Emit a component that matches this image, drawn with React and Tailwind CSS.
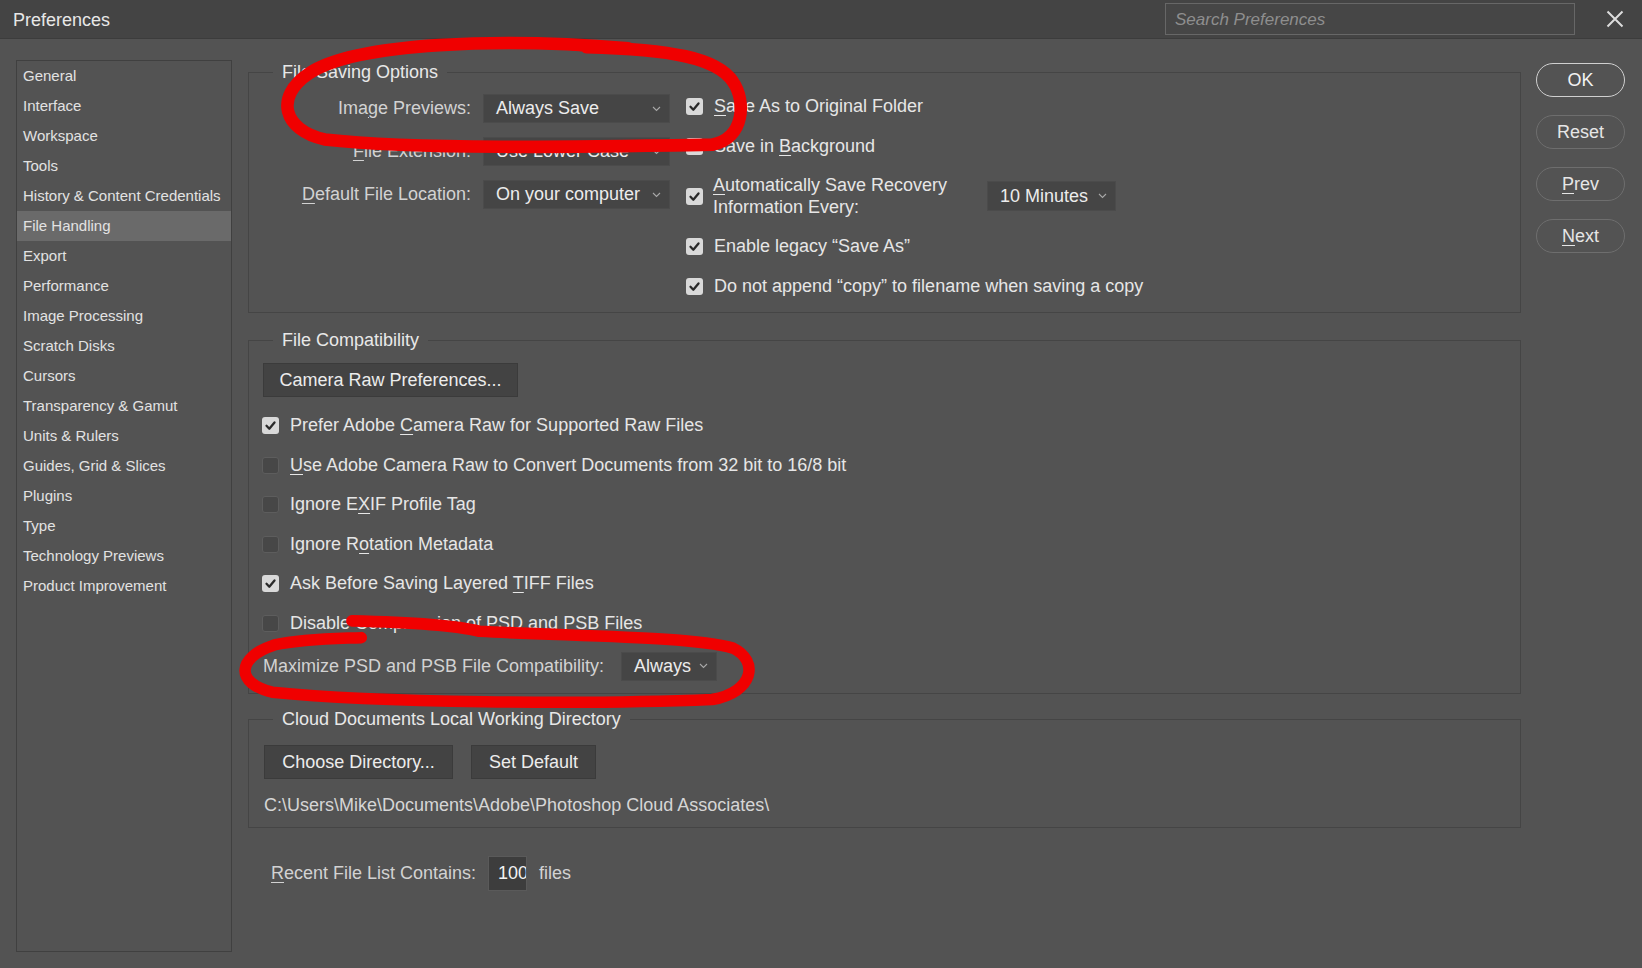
import React from 'react';

const sidebarItems = [
  'General',
  'Interface',
  'Workspace',
  'Tools',
  'History & Content Credentials',
  'File Handling',
  'Export',
  'Performance',
  'Image Processing',
  'Scratch Disks',
  'Cursors',
  'Transparency & Gamut',
  'Units & Rulers',
  'Guides, Grid & Slices',
  'Plugins',
  'Type',
  'Technology Previews',
  'Product Improvement',
];

const Chevron = () => (
  <svg width="9" height="6" viewBox="0 0 9 6" fill="none">
    <path d="M1 1l3.5 3.5L8 1" stroke="#a8a8a8" strokeWidth="1.1" />
  </svg>
);

const Check = ({ checked }) =>
  checked ? (
    <div className="w-[17px] h-[17px] rounded-[3px] bg-[#d9d9d9] flex items-center justify-center shrink-0">
      <svg width="13" height="13" viewBox="0 0 13 13" fill="none">
        <path d="M2.5 6.8l2.8 2.9 5.2-6.3" stroke="#2a2a2a" strokeWidth="2.3" strokeLinecap="round" strokeLinejoin="round" />
      </svg>
    </div>
  ) : (
    <div className="w-[17px] h-[17px] rounded-[3px] bg-[#474747] border border-[#5d5d5d] shrink-0" />
  );

const Select = ({ className, children }) => (
  <div className={`h-[29px] bg-[#454545] border border-[#4b4b4b] flex items-center justify-between pl-[12px] pr-[8px] text-[#ececec] ${className}`}>
    <span>{children}</span>
    <Chevron />
  </div>
);

const Btn = ({ className, children }) => (
  <div className={`h-[34px] bg-[#434343] border border-[#3b3b3b] flex items-center justify-center text-[#ececec] ${className}`}>
    {children}
  </div>
);

const Row = ({ checked, children, className = 'h-[40px]' }) => (
  <div className={`flex items-center ${className}`}>
    <Check checked={checked} />
    <div className="ml-[11px] text-[#e6e6e6]">{children}</div>
  </div>
);

const U = ({ children }) => <span className="underline underline-offset-[3px]">{children}</span>;

const Group = ({ title, className = '', children }) => (
  <fieldset className={`border border-[#454545] ${className}`}>
    <legend className="ml-[24px] px-[9px] leading-[22px] text-[#e8e8e8]">{title}</legend>
    {children}
  </fieldset>
);

export default function App() {
  return (
    <div className="relative w-[1642px] h-[968px] overflow-hidden bg-[#535353] text-[18px] font-['Liberation_Sans',Arial,sans-serif]">
      {/* title bar */}
      <div className="h-[39px] bg-[#444444] border-b border-[#3c3c3c] flex items-center pl-[13px]">
        <div className="mt-[3px] text-[#e8e8e8]">Preferences</div>
        <div className="ml-auto w-[410px] h-[32px] border border-[#676767] bg-[#464646] flex items-center px-[9px] pt-[1px] italic text-[17px] text-[#8e8e8e]">
          Search Preferences
        </div>
        <svg className="ml-[31px] mr-[18px]" width="18" height="18" viewBox="0 0 18 18" fill="none">
          <path d="M1.5 1.5l15 15M16.5 1.5l-15 15" stroke="#dcdcdc" strokeWidth="2" />
        </svg>
      </div>

      <div className="flex items-start">
        {/* sidebar */}
        <div className="ml-[16px] mt-[21px] w-[216px] h-[892px] border border-[#404040] text-[15px] text-[#e2e2e2]">
          {sidebarItems.map((item) => (
            <div
              key={item}
              className={`h-[30px] flex items-center px-[6px] ${item === 'File Handling' ? 'bg-[#6a6a6a]' : ''}`}
            >
              {item}
            </div>
          ))}
        </div>

        {/* main */}
        <div className="ml-[16px] mt-[22px] w-[1273px]">
          <Group title="File Saving Options">
            <div className="flex pb-[6px]">
              <div className="w-[421px] flex flex-col gap-[14px] pt-[11px]">
                <div className="h-[29px] flex items-center justify-end gap-[12px]">
                  <span className="text-[#d2d2d2]">Ima<U>g</U>e Previews:</span>
                  <Select className="w-[187px]">Always Save</Select>
                </div>
                <div className="h-[29px] flex items-center justify-end gap-[12px]">
                  <span className="text-[#d2d2d2]"><U>F</U>ile Extension:</span>
                  <Select className="w-[187px]">Use Lower Case</Select>
                </div>
                <div className="h-[29px] flex items-center justify-end gap-[12px]">
                  <span className="text-[#d2d2d2]"><U>D</U>efault File Location:</span>
                  <Select className="w-[187px]">On your computer</Select>
                </div>
              </div>
              <div className="ml-[16px] flex flex-col pt-[3px]">
                <Row checked><U>S</U>ave As to Original Folder</Row>
                <Row checked>Save in <U>B</U>ackground</Row>
                <div className="h-[60px] flex items-center">
                  <Check checked />
                  <div className="ml-[10px] w-[274px] leading-[22px] text-[#e6e6e6]">
                    <U>A</U>utomatically Save Recovery
                    <br />
                    Information Every:
                  </div>
                  <Select className="w-[129px] h-[30px]">10 Minutes</Select>
                </div>
                <Row checked>Enable legacy “Save As”</Row>
                <Row checked>Do not append “copy” to filename when saving a copy</Row>
              </div>
            </div>
          </Group>

          <Group title="File Compatibility" className="mt-[16px]">
            <div className="pt-[12px] pl-[13px] pb-[12px]">
              <Btn className="ml-[1px] w-[255px]">Camera Raw Preferences...</Btn>
              <div className="mt-[9px]">
                <Row checked className="h-[39.5px]">Prefer Adobe <U>C</U>amera Raw for Supported Raw Files</Row>
                <Row className="h-[39.5px]"><U>U</U>se Adobe Camera Raw to Convert Documents from 32 bit to 16/8 bit</Row>
                <Row className="h-[39.5px]">Ignore E<U>X</U>IF Profile Tag</Row>
                <Row className="h-[39.5px]">Ignore R<U>o</U>tation Metadata</Row>
                <Row checked className="h-[39.5px]">Ask Before Saving Layered <U>T</U>IFF Files</Row>
                <Row className="h-[39.5px]">Disable Compression of PSD and PSB Files</Row>
              </div>
              <div className="mt-[8px] h-[30px] flex items-center pl-[1px]">
                <span className="w-[358px] text-[#d2d2d2]">Maximize PSD and PSB File Compatibility:</span>
                <Select className="w-[96px]">Always</Select>
              </div>
            </div>
          </Group>

          <Group title="Cloud Documents Local Working Directory" className="mt-[14px]">
            <div className="pt-[15px] pl-[15px] pb-[11px]">
              <div className="flex gap-[18px]">
                <Btn className="w-[189px] h-[33px]">Choose Directory...</Btn>
                <Btn className="w-[125px] h-[33px]">Set Default</Btn>
              </div>
              <div className="mt-[15px] leading-[22px] text-[#d6d6d6]">
                C:\Users\Mike\Documents\Adobe\Photoshop Cloud Associates\
              </div>
            </div>
          </Group>

          <div className="mt-[28px] pl-[23px] flex items-center">
            <span className="w-[217px] text-[#d2d2d2]"><U>R</U>ecent File List Contains:</span>
            <div className="w-[39px] h-[35px] bg-[#3d3d3d] border border-[#5a5a5a] overflow-hidden flex items-center pl-[9px] text-[#f2f2f2] whitespace-nowrap">
              100
            </div>
            <span className="ml-[12px] text-[#d2d2d2]">files</span>
          </div>
        </div>

        {/* action buttons */}
        <div className="ml-[15px] mt-[24px] w-[89px] flex flex-col gap-[18px] text-[18px]">
          <div className="h-[34px] rounded-full border-[1.5px] border-[#d0d0d0] flex items-center justify-center text-[#f2f2f2]">OK</div>
          <div className="h-[34px] rounded-full border border-[#6e6e6e] flex items-center justify-center text-[#e6e6e6]">Reset</div>
          <div className="h-[34px] rounded-full border border-[#6e6e6e] flex items-center justify-center text-[#e6e6e6]"><span><U>P</U>rev</span></div>
          <div className="h-[34px] rounded-full border border-[#6e6e6e] flex items-center justify-center text-[#e6e6e6]"><span><U>N</U>ext</span></div>
        </div>
      </div>

      {/* hand-drawn red annotations */}
      <svg
        className="absolute inset-0 pointer-events-none"
        width="1642"
        height="968"
        viewBox="0 0 1568 923"
        preserveAspectRatio="none"
        fill="none"
      >
        <g stroke="#f00000" strokeLinecap="round" strokeLinejoin="round">
          <path
            strokeWidth="12"
            d="M600 46 C480 36, 340 40, 295 70 C262 92, 270 124, 310 133 C400 143, 560 140, 680 138 C712 132, 712 95, 700 78 C685 55, 640 47, 560 45"
          />
          <path strokeWidth="9" d="M548 44 L604 47" />
          <path
            strokeWidth="11"
            d="M336 592 C380 593, 430 595, 458 602 C560 607, 660 607, 700 618 C725 630, 720 660, 680 667 C560 672, 360 670, 260 660 C225 652, 225 627, 262 615 C290 609, 320 609, 345 608"
          />
        </g>
      </svg>
    </div>
  );
}
